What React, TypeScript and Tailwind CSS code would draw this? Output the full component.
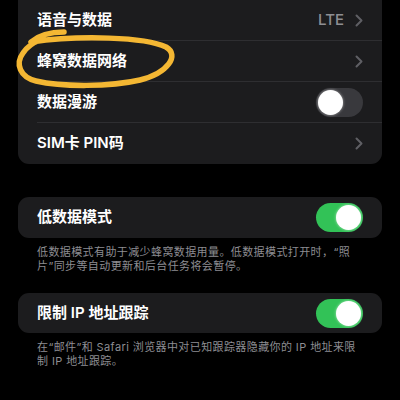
import React from "react"

const font = { fontFamily: 'Inter, "Noto Sans CJK SC", sans-serif' }

const Chevron = () => (
  <svg width="8" height="13" viewBox="0 0 8 13" className="ml-[11px]">
    <path d="M1.5 1.5 L6.5 6.5 L1.5 11.5" fill="none" stroke="#5f5f64" strokeWidth="2" strokeLinecap="round" strokeLinejoin="round" />
  </svg>
)

const Toggle = ({ on }: { on: boolean }) => (
  <div
    className={`w-[47px] h-[29px] rounded-full p-[2px] flex ${on ? "bg-[#32c257] justify-end" : "bg-[#39393d] justify-start"}`}>
    <div className="w-[25px] h-[25px] rounded-full bg-white shadow-[0_0_3px_rgba(255,255,255,0.6)]" />
  </div>
)

interface RowProps {
  label: string
  right: React.ReactNode
  last?: boolean
}

const Row = ({ label, right, last }: RowProps) => (
  <div className="h-[41px] pl-[19px] flex">
    <div
      className={`flex-1 flex items-center justify-between pr-[19px] ${last ? "" : "border-b border-[#2e2e31]"}`}>
      <span className="text-[15px] font-semibold text-white">{label}</span>
      <div className="flex items-center">{right}</div>
    </div>
  </div>
)

export default function App() {
  return (
    <div className="w-[400px] h-[400px] bg-black overflow-hidden relative" style={font}>
      <div className="mx-[18px] bg-[#1c1c1e] rounded-b-[11px]">
        <Row
          label="语音与数据"
          right={
            <>
              <span className="text-[15px] font-medium text-[#8e8e93]">LTE</span>
              <Chevron />
            </>
          }
        />
        <Row label="蜂窝数据网络" right={<Chevron />} />
        <Row label="数据漫游" right={<Toggle on={false} />} />
        <Row label="SIM卡 PIN码" right={<Chevron />} last />
      </div>

      <div className="mt-[33px] mx-[18px] bg-[#1c1c1e] rounded-[11px]">
        <Row label="低数据模式" right={<Toggle on />} last />
      </div>
      <p className="mt-[7px] pl-[37px] pr-[20px] text-[11px] leading-[14px] tracking-[0.4px] text-[#8d8d92]">
        低数据模式有助于减少蜂窝数据用量。低数据模式打开时，“照
        <br />
        片”同步等自动更新和后台任务将会暂停。
      </p>

      <div className="mt-[20px] mx-[18px] bg-[#1c1c1e] rounded-[11px]">
        <div className="h-[40px] pl-[19px] pr-[19px] flex items-center justify-between">
          <span className="text-[15px] font-semibold text-white">限制 IP 地址跟踪</span>
          <Toggle on />
        </div>
      </div>
      <p className="mt-[7px] pl-[37px] pr-[20px] text-[11px] leading-[14px] tracking-[0.4px] text-[#8d8d92]">
        在“邮件”和 Safari 浏览器中对已知跟踪器隐藏你的 IP 地址来限
        <br />
        制 IP 地址跟踪。
      </p>

      <svg className="absolute left-0 top-0 pointer-events-none" width="400" height="400">
        <path
          d="M64 32 C50 32 38 36 31 42 C80 35 145 37 166 47 C180 55 168 73 140 80 C110 87 62 87 36 81 C20 77 15 64 23 53 C27 47 32 43 40 40"
          fill="none"
          stroke="#f4b733"
          strokeWidth="5.5"
          strokeLinecap="round"
          strokeLinejoin="round"
        />
      </svg>
    </div>
  )
}
